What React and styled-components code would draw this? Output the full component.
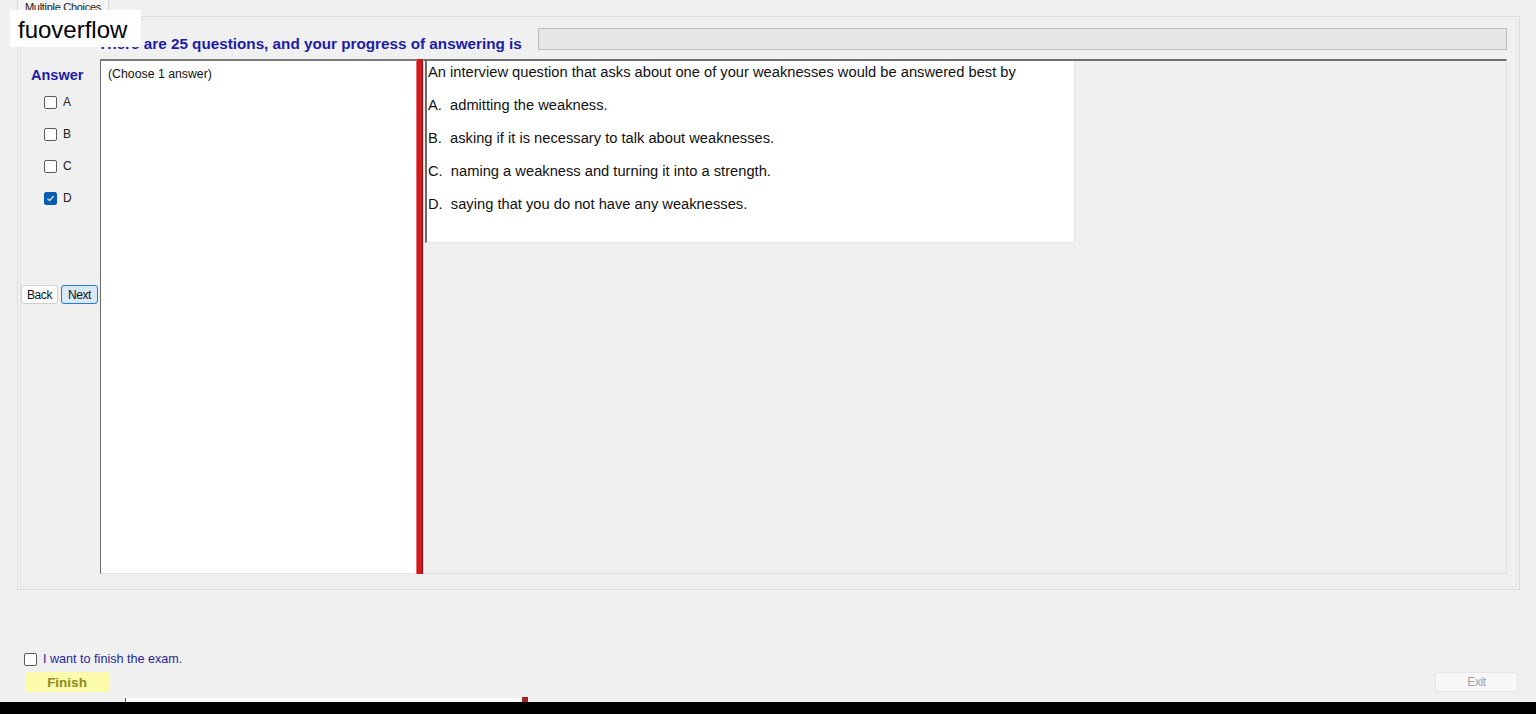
import React from 'react'
import styled, { createGlobalStyle } from 'styled-components'

const Global = createGlobalStyle`
  html, body {
    margin: 0;
    padding: 0;
    background: #f0f0f0;
    font-family: "Liberation Sans", Arial, sans-serif;
  }
`

const Page = styled.div`
  position: relative;
  width: 1536px;
  height: 714px;
  display: flex;
  flex-direction: column;
  overflow: hidden;
  background: #f0f0f0;
`

const Watermark = styled.div`
  position: absolute;
  left: 10px;
  top: 10px;
  width: 123px;
  height: 37px;
  padding-left: 8px;
  background: #fff;
  color: #000;
  font-size: 24px;
  line-height: 40px;
  z-index: 5;
`

const TabStrip = styled.div`
  display: flex;
  height: 17px;
  padding-left: 17px;
`

const Tab = styled.div`
  width: 83px;
  padding-left: 7px;
  border: 1px solid #d6d6d6;
  border-top: none;
  border-bottom: none;
  background: #f5f5f5;
  font-size: 11px;
  line-height: 14px;
  color: #222;
  letter-spacing: -0.3px;
`

const TabPanel = styled.div`
  margin-left: 17px;
  width: 1497px;
  height: 568px;
  border: 1px solid #dcdcdc;
  padding: 2px;
`

const Group = styled.div`
  height: 556px;
  border: 1px solid #e3e3e3;
  padding: 0 9px 10px 0;
  display: flex;
  flex-direction: column;
`

const HeaderRow = styled.div`
  display: flex;
  align-items: flex-start;
  padding-top: 8px;
  height: 22px;
  margin-bottom: 9px;
`

const Heading = styled.div`
  margin-left: 77px;
  width: 440px;
  padding-top: 7px;
  font-size: 15.25px;
  font-weight: bold;
  color: #1c1ca6;
  white-space: nowrap;
`

const Progress = styled.div`
  flex: 1;
  height: 20px;
  background: #e6e6e6;
  border: 1px solid #bcbcbc;
`

const BodyRow = styled.div`
  display: flex;
  height: 515px;
`

const LeftCol = styled.div`
  width: 79px;
  display: flex;
  flex-direction: column;
`

const AnswerLabel = styled.div`
  margin: 8px 0 3px 10px;
  font-size: 14.5px;
  line-height: 16px;
  font-weight: bold;
  color: #1c1ca6;
`

const OptionRow = styled.label`
  display: flex;
  align-items: center;
  height: 32px;
  padding-left: 23px;
  gap: 6px;
  font-size: 12px;
  color: #222;
`

const Box = styled.span`
  width: 11px;
  height: 11px;
  border-radius: 2px;
  border: 1px solid ${p => (p.checked ? '#0a5cb0' : '#5c5c5c')};
  background: ${p => (p.checked ? '#0a5cb0' : '#fff')};
  display: flex;
  align-items: center;
  justify-content: center;
`

const Buttons = styled.div`
  display: flex;
  gap: 3px;
  margin-top: 71px;
`

const Btn = styled.button`
  width: 37px;
  height: 19px;
  padding: 0;
  border-radius: 3px;
  font-family: "Liberation Sans", Arial, sans-serif;
  font-size: 12px;
  letter-spacing: -0.4px;
  color: #111;
  border: 1px solid ${p => (p.primary ? '#2a7ad0' : '#d0d0d0')};
  background: ${p => (p.primary ? '#d7e9f8' : '#fdfdfd')};
`

const TextBox = styled.div`
  box-sizing: content-box;
  width: 308px;
  height: 512px;
  background: #fff;
  border-top: 2px solid #7a7a7a;
  border-left: 1px solid #6a6a6a;
  border-bottom: 1px solid #e4e4e4;
  padding-left: 7px;
  font-size: 12.3px;
  line-height: 26px;
  color: #111;
`

const Splitter = styled.div`
  width: 5px;
  height: 515px;
  background: #cf1a1f;
  border-left: 1px solid #e86a6a;
  border-right: 1px solid #7c1212;
`

const RightPanel = styled.div`
  flex: 1;
  height: 512px;
  border-top: 2px solid #707070;
  border-left: 1px solid #d8d8d8;
  border-right: 1px solid #dedede;
  border-bottom: 1px solid #e0e0e0;
  padding-left: 1px;
`

const Question = styled.div`
  box-sizing: border-box;
  width: 650px;
  height: 182px;
  padding: 2px 0 0 1px;
  background: #fff;
  border-left: 2px solid #6c6c6c;
  border-right: 1px solid #e6e6e6;
  border-bottom: 1px solid #e6e6e6;
  font-size: 14.7px;
  line-height: 17px;
  color: #111;
`

const Line = styled.div`
  margin-bottom: 16px;
  white-space: pre;
  &:first-child {
    padding-top: 1px;
  }
`

const Footer = styled.div`
  display: flex;
  flex-direction: column;
  flex: 1;
`

const FinishCheck = styled.label`
  display: flex;
  align-items: center;
  gap: 6px;
  margin: 62px 0 0 24px;
  height: 14px;
  font-size: 12.6px;
  color: #26269c;
`

const ActionRow = styled.div`
  display: flex;
  justify-content: space-between;
  margin: 6px 18px 0 25px;
`

const FinishBtn = styled.div`
  width: 84px;
  height: 20px;
  background: #fbfbab;
  color: #8c8c22;
  font-size: 13.5px;
  font-weight: bold;
  line-height: 22px;
  text-align: center;
`

const ExitBtn = styled.div`
  width: 81px;
  height: 18px;
  background: #f7f7f7;
  border: 1px solid #e6e6e6;
  border-radius: 3px;
  color: #a0a0a0;
  font-size: 12px;
  letter-spacing: -0.4px;
  line-height: 19px;
  text-align: center;
`

const Strip = styled.div`
  position: relative;
  margin: 6px 0 0 125px;
  width: 399px;
  height: 4px;
  background: #fff;
  border-left: 1px solid #555;

  &::after {
    content: '';
    position: absolute;
    right: -3px;
    top: -1px;
    width: 6px;
    height: 5px;
    background: #a52222;
  }
`

const BlackBar = styled.div`
  height: 12px;
  background: #000;
`

const Check = ({ checked }) => (
  <Box checked={checked}>
    {checked && (
      <svg width="9" height="9" viewBox="0 0 9 9">
        <path d="M1.5 4.6 L3.6 6.6 L7.6 2.2" fill="none" stroke="#fff" strokeWidth="1.1" />
      </svg>
    )}
  </Box>
)

const options = [
  { key: 'A', checked: false },
  { key: 'B', checked: false },
  { key: 'C', checked: false },
  { key: 'D', checked: true },
]

const lines = [
  'An interview question that asks about one of your weaknesses would be answered best by',
  'A.  admitting the weakness.',
  'B.  asking if it is necessary to talk about weaknesses.',
  'C.  naming a weakness and turning it into a strength.',
  'D.  saying that you do not have any weaknesses.',
]

export default function App() {
  return (
    <Page>
      <Global />
      <Watermark>fuoverflow</Watermark>
      <TabStrip>
        <Tab>Multiple Choices</Tab>
      </TabStrip>
      <TabPanel>
        <Group>
          <HeaderRow>
            <Heading>There are 25 questions, and your progress of answering is</Heading>
            <Progress />
          </HeaderRow>
          <BodyRow>
            <LeftCol>
              <AnswerLabel>Answer</AnswerLabel>
              {options.map(o => (
                <OptionRow key={o.key}>
                  <Check checked={o.checked} />
                  {o.key}
                </OptionRow>
              ))}
              <Buttons>
                <Btn>Back</Btn>
                <Btn primary>Next</Btn>
              </Buttons>
            </LeftCol>
            <TextBox>(Choose 1 answer)</TextBox>
            <Splitter />
            <RightPanel>
              <Question>
                {lines.map(l => (
                  <Line key={l}>{l}</Line>
                ))}
              </Question>
            </RightPanel>
          </BodyRow>
        </Group>
      </TabPanel>
      <Footer>
        <FinishCheck>
          <Check />
          I want to finish the exam.
        </FinishCheck>
        <ActionRow>
          <FinishBtn>Finish</FinishBtn>
          <ExitBtn>Exit</ExitBtn>
        </ActionRow>
        <Strip />
      </Footer>
      <BlackBar />
    </Page>
  )
}
